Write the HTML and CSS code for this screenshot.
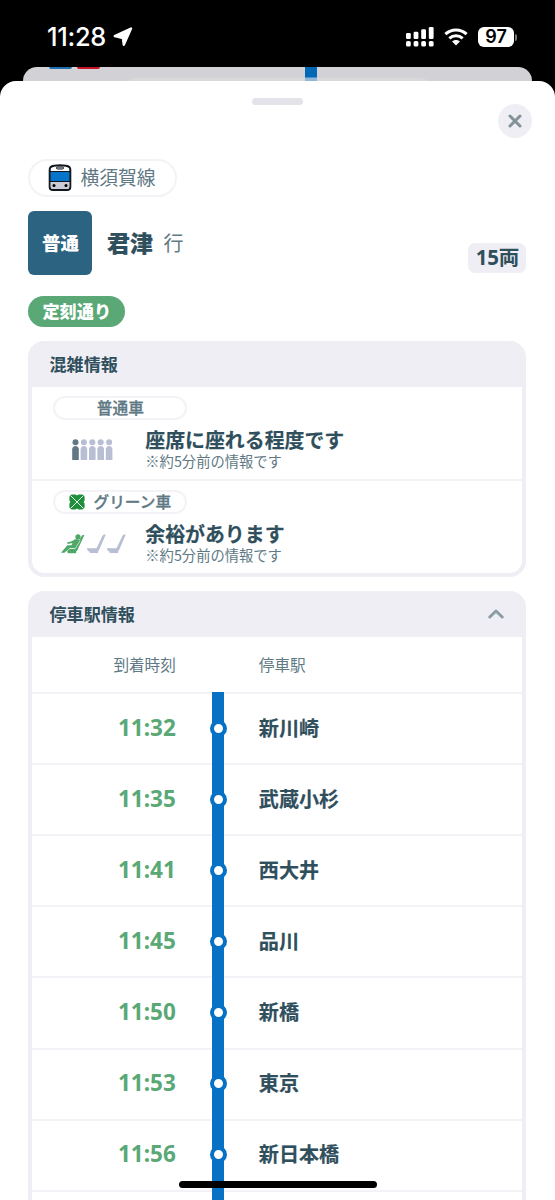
FILE: index.html
```html
<!DOCTYPE html>
<html lang="ja">
<head>
<meta charset="utf-8">
<title>列車情報</title>
<link rel="stylesheet" href="styles.css">
</head>
<body>
<div class="phone">
  <header class="status">
    <span class="clock">11:28</span>
    <svg class="locate" width="20" height="20" viewBox="0 0 20 20"><path d="M18 1.600 10.800 17.800 9.900 11 1.800 9.200z" stroke="#fff" stroke-width="2.400" stroke-linejoin="round"/></svg>
    <span class="spacer"></span>
    <svg class="signal" width="28" height="20" viewBox="0 0 28 20">
      <rect x="0" y="6" width="4.8" height="6" rx="1.3"/><rect x="7.6" y="4.7" width="4.8" height="7.3" rx="1.3"/><rect x="15.2" y="2.2" width="4.8" height="9.8" rx="1.3"/><rect x="22.8" y="0" width="4.8" height="12" rx="1.3"/>
      <rect x="0" y="14" width="4.8" height="5.5" rx="1.6"/><rect x="7.6" y="14" width="4.8" height="5.5" rx="1.6"/><rect x="15.2" y="14" width="4.8" height="5.5" rx="1.6"/><rect x="22.8" y="14" width="4.8" height="5.5" rx="1.6"/>
    </svg>
    <svg class="wifi" width="24" height="18" viewBox="0 0 24 18">
      <path class="arc" d="M1.400 6.200C7.300.6 16.700.6 22.600 6.200M5.300 10.400c3.800-3.500 9.600-3.500 13.400 0"/><path d="M8.100 13.400c2.200-2 5.600-2 7.800 0L12 17.400z"/>
    </svg>
    <span class="battery">97</span><span class="cap"></span>
  </header>
  <div class="behind"><i class="tab blue"></i><i class="tab red"></i><i class="shade"></i><i class="track"></i></div>
  <main class="sheet">
    <div class="grabber"></div>
    <button class="close" aria-label="閉じる"><svg width="14" height="14" viewBox="0 0 14 14"><path d="M2 2l10 10M12 2L2 12"/></svg></button>
    <div class="line-pill">
      <svg width="24" height="28" viewBox="0 0 24 28">
        <path d="M1.7 5.500C1.700 3 3.500 2.200 6 1.800c4-.7 8-.7 12 0 2.500.4 4.300 1.200 4.300 3.700v17.400c0 2-1.300 3-3.200 3H4.900c-1.900 0-3.200-1-3.200-3z" fill="#fff" stroke="#111820" stroke-width="2"/>
        <path d="M2.700 17.400h18.600v5c0 1.500-.7 2.500-2.300 2.500H5c-1.600 0-2.300-1-2.300-2.500z" fill="#ccccd6"/>
        <path d="M2 7.500h20v10H2z" fill="#0674c8" stroke="#111820" stroke-width="1.100"/>
        <rect x="8.500" y="3" width="7" height="2" rx="1" stroke="#111820" fill="#ccd" stroke-width="1"/>
        <circle cx="6" cy="21.400" r="1.500"/><circle cx="18" cy="21.400" r="1.500"/>
      </svg>
      <span>横須賀線</span>
    </div>
    <div class="train">
      <div class="kind">普通</div>
      <div class="dest">君津</div><div class="bound">行</div>
      <div class="cars">15両</div>
    </div>
    <div class="ontime">定刻通り</div>

    <section class="panel crowd">
      <h2>混雑情報</h2>
      <div class="car">
        <div class="car-type">普通車</div>
        <div class="car-body">
          <svg class="people" width="42" height="22" viewBox="0 0 42 22">
            <defs><g id="person"><circle cx="3.500" cy="3.200" r="3"/><path d="M.2 10.200C.2 8.500 1.600 7.100 3.500 7.100s3.300 1.400 3.300 3.100v10.800H.2z"/></g></defs>
            <use href="#person" fill="#607984"/><use href="#person" x="8.400"/><use href="#person" x="16.800"/><use href="#person" x="25.200"/><use href="#person" x="33.600"/>
          </svg>
          <div class="level"><strong>座席に座れる程度です</strong><small>※約5分前の情報です</small></div>
        </div>
      </div>
      <div class="car green">
        <div class="car-type">
          <svg width="16" height="16" viewBox="0 0 16 16"><path d="M2.500.4H6.500L8 1.400 9.500.4h4L15.600 2.500v4L14.600 8l1 1.500v4l-2.100 2.100h-4L8 14.600l-1.500 1h-4L.4 13.500v-4L1.400 8l-1-1.500v-4z" fill="#1f8f3b"/><path d="M2 2l12 12M14 2L2 14" stroke="#e4f4e8" stroke-width="1"/></svg>
          <span>グリーン車</span>
        </div>
        <div class="car-body">
          <svg class="seats" width="65" height="20" viewBox="0 0 65 20">
            <defs><path id="seat" d="M0 14.300h9.500L15.800 1.300q.5-.9 1.400-.9h1.600L12.300 15.500l-1.200 2.100v1.500H2.600v-1.600C1 17.300 0 16.300 0 14.300z"/></defs>
            <g fill="#4fa867">
              <path d="M3.500 15h10L20.800 1.800q.5-.8 1.300-.8h1.300L16.200 16.400l-1 1.200v1.700H6.600v-1.500z"/>
              <circle cx="17" cy="2.900" r="2.600"/>
              <path d="M13.500 5.600c2-.6 4.100-.1 5.200 1L14.200 14.400H8.800L3.600 18.800H0l6.400-7.500h4l1.200-2.200-5 1-.5-1.500 4.700-1.300z"/>
            </g>
            <use href="#seat" x="26"/><use href="#seat" x="46"/>
            <path d="M3.800 18.700 8.800 14.500h5.500l4.900-8" stroke="#fff" stroke-width=".6" fill="none"/>
          </svg>
          <div class="level"><strong>余裕があります</strong><small>※約5分前の情報です</small></div>
        </div>
      </div>
    </section>

    <section class="panel stops">
      <h2><span>停車駅情報</span><svg width="16" height="10" viewBox="0 0 16 10"><path d="M1.800 8 8 2l6.200 6"/></svg></h2>
      <div class="head"><span>到着時刻</span><span></span><span>停車駅</span></div>
      <div class="stop"><time>11:32</time><i class="rail"></i><b>新川崎</b></div>
      <div class="stop"><time>11:35</time><i class="rail"></i><b>武蔵小杉</b></div>
      <div class="stop"><time>11:41</time><i class="rail"></i><b>西大井</b></div>
      <div class="stop"><time>11:45</time><i class="rail"></i><b>品川</b></div>
      <div class="stop"><time>11:50</time><i class="rail"></i><b>新橋</b></div>
      <div class="stop"><time>11:53</time><i class="rail"></i><b>東京</b></div>
      <div class="stop"><time>11:56</time><i class="rail"></i><b>新日本橋</b></div>
      <div class="stop"><time></time><i class="rail"></i><b></b></div>
    </section>
  </main>
  <div class="home"></div>
</div>
</body>
</html>
```
FILE: styles.css
```css
*, *::after { box-sizing: border-box; }
body { margin: 0; background: #000; font-family: "Noto Sans CJK JP", sans-serif; color: #304f5d; }
.phone { position: relative; width: 555px; height: 1200px; overflow: hidden; background: #000; display: flex; flex-direction: column; }
.status { height: 67px; flex: none; display: flex; align-items: center; padding: 7px 38px 0 47px; color: #fff; }
.status svg { fill: #fff; flex: none; }
.clock { font: 500 25.400px/30px Inter, sans-serif; letter-spacing: -.300px; width: 66px; white-space: nowrap; }
.spacer { flex: 1; }
.signal { margin-right: 10px; }
.wifi { margin-right: 10px; }
.wifi .arc { fill: none; stroke: #fff; stroke-width: 3; }
.battery { width: 36px; height: 20px; border-radius: 6px; background: #fff; color: #000; font: 600 18px/20px Inter, sans-serif; text-align: center; }
.cap { width: 2px; height: 7px; margin: 0 0 0 1px; border-radius: 0 2px 2px 0; background: #777; }
.behind { position: relative; flex: none; height: 14px; margin: 0 23px; background: #d2d1d6; border-radius: 14px 14px 0 0; overflow: hidden; }
.behind i { position: absolute; top: 0; }
.behind .tab { width: 23px; height: 2px; border-radius: 0 0 3px 3px; }
.behind .blue { left: 26px; background: #1e6fae; }
.behind .red { left: 54px; background: #ca1226; }
.behind .shade { top: 11px; left: 102px; width: 306px; height: 20px; border-radius: 12px; background: #d9d9da; }
.behind .track { left: 282px; width: 12px; height: 14px; background: linear-gradient(#0068b5 10px, #8fb8d8 11px); }
.sheet { position: relative; flex: 1; min-height: 0; background: #fff; border-radius: 16px 16px 0 0; padding: 17px 28.700px 0 28px; }
.grabber { width: 51px; height: 7px; border-radius: 4px; background: #e4e3e9; margin: 0 auto; }
.close { position: absolute; top: 23px; right: 23px; width: 34px; height: 34px; border: 0; border-radius: 50%; background: #efeef4; padding: 0; display: grid; place-items: center; }
.close svg { fill: none; stroke: #829298; stroke-width: 3; stroke-linecap: round; }
.line-pill { margin-top: 54px; width: 149px; height: 38px; border: 2px solid #f3f3f7; border-radius: 19px; display: flex; align-items: center; padding-left: 18px; gap: 9px; font-size: 18.800px; line-height: 28px; color: #607984; white-space: nowrap; }
.line-pill span { margin: -2px 0 0 -.5px; }
.train { display: flex; align-items: center; height: 64px; margin-top: 13.600px; }
.kind { margin-left: .4px; width: 64px; height: 64px; border-radius: 6px; background: #2c6381; color: #fff; font-weight: 900; font-size: 18.500px; line-height: 62px; text-align: center; }
.dest { margin: -2px 0 0 14.500px; font-size: 23px; font-weight: 900; -webkit-text-stroke: .2px; }
.bound { margin: -1px 0 0 10.500px; font-size: 20px; color: #607984; }
.cars { margin: 31px 0 0 auto; width: 58px; height: 30px; border-radius: 7px; background: #efeef4; text-align: center; font: 700 20.500px/28px "Noto Sans", "Noto Sans CJK JP", sans-serif; letter-spacing: -.200px; white-space: nowrap; }
.ontime { margin: 21.400px 0 0 .300px; width: 97px; height: 31px; border-radius: 16px; background: #59a875; color: #fff; font-weight: 900; font-size: 17.200px; line-height: 30px; text-align: center; }
.panel { margin: 14.500px 0 0 .300px; background: #efeef4; border: 4px solid #efeef4; border-top: 0; border-radius: 16px; overflow: hidden; }
.panel h2 { margin: 0; height: 45.300px; padding: 0 18px 2px 17.200px; display: flex; align-items: center; justify-content: space-between; font-size: 17.100px; font-weight: 700; }
.panel h2 svg { fill: none; stroke: #8b9da3; stroke-width: 3; stroke-linecap: round; stroke-linejoin: round; margin-top: 2px; }
.crowd { height: 235.500px; }
.car { height: 92.500px; background: #fff; padding: 9.300px 0 0 21px; }
.car.green { height: 93.700px; border-top: 2px solid #f3f3f7; border-radius: 0 0 12px 12px; padding-top: 8.700px; }
.car-type { width: 134px; height: 24px; border: 2px solid #f3f3f7; border-radius: 12px; display: flex; align-items: center; justify-content: center; gap: 8px; font-size: 15.700px; line-height: 20px; font-weight: 500; color: #607984; -webkit-text-stroke: .300px; }
.car-body { display: flex; height: 56px; }
.people { flex: none; margin: 18.500px 0 0 19px; fill: #b8bed3; }
.seats { flex: none; margin: 20.500px 0 0 8px; fill: #b8bed3; }
.level { margin: 6.700px 0 0 auto; width: 377px; display: flex; flex-direction: column; }
.level strong { font-size: 19.900px; line-height: 25px; font-weight: 700; -webkit-text-stroke: .2px; }
.level small { font-size: 14.300px; line-height: 17px; color: #607984; }
.stops { height: 660px; }
.head, .stop { display: grid; grid-template-columns: 143.500px 83px 1fr; background: #fff; }
.head { height: 55.300px; align-items: center; font-size: 15.600px; color: #607984; padding-bottom: 1px; }
.head span:first-child { text-align: right; }
.stop { height: 71.100px; border-top: 2px solid #f3f3f7; }
.stop time { align-self: center; margin-top: -1.500px; text-align: right; white-space: nowrap; font: 700 22.500px/30px "Noto Sans", sans-serif; color: #59a875; }
.stop b { align-self: center; margin-top: -2px; font-size: 20.100px; line-height: 30px; font-weight: 700; -webkit-text-stroke: .2px; }
.rail { width: 12px; margin: -2px 0 0 36.300px; background: #0671c5; display: flex; align-items: center; justify-content: center; }
.rail::after { content: ""; flex: none; margin-top: 1px; width: 17px; height: 17px; border: 4px solid #0671c5; border-radius: 50%; background: #fff; }
.home { position: absolute; left: 179px; bottom: 12px; width: 198px; height: 7px; border-radius: 4px; background: #000; }
```
